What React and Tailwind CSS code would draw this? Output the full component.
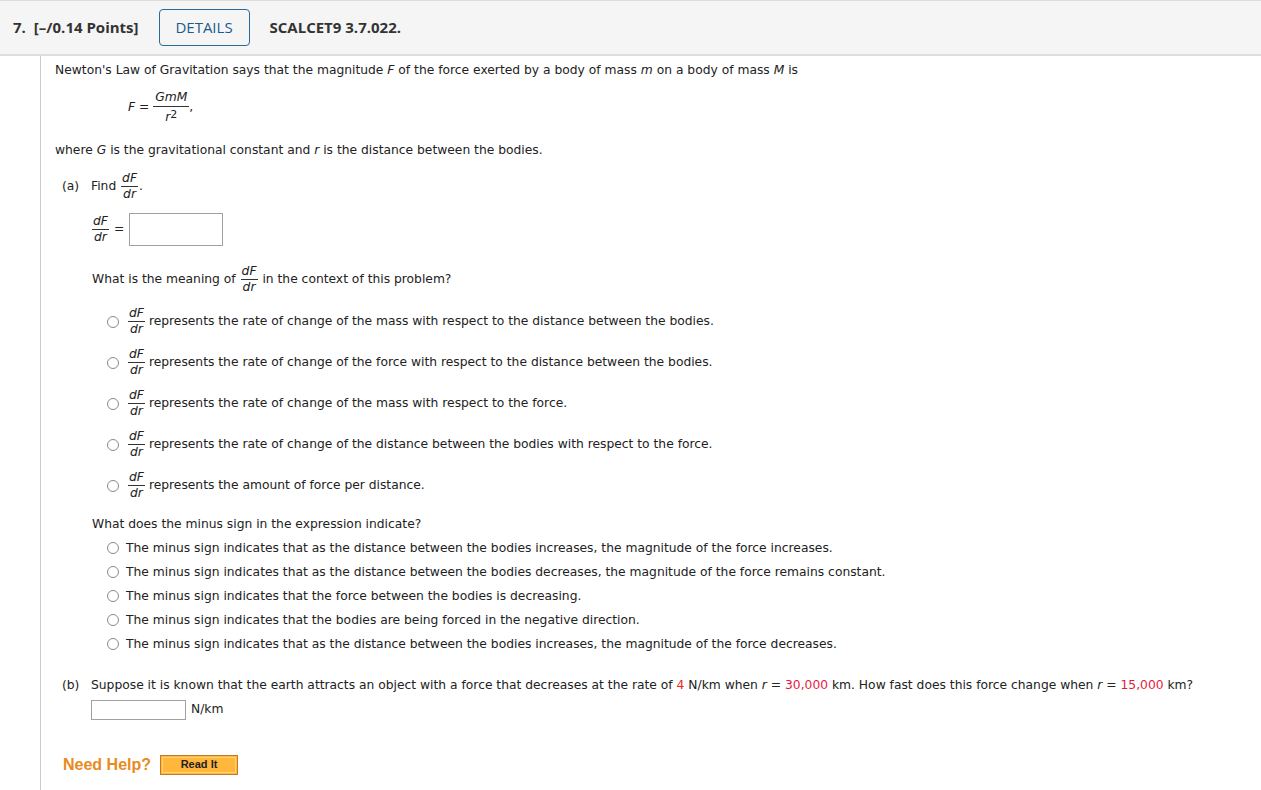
import React from "react";

function Frac({ num, den }) {
  return (
    <span className="inline-flex flex-col items-center align-middle mx-[1px]">
      <span className="leading-[13px] px-[1px] pb-[1px]">{num}</span>
      <span className="h-px w-full bg-[#333]" />
      <span className="leading-[13px] pt-[1px]">{den}</span>
    </span>
  );
}

const dFdr = <Frac num={<i>dF</i>} den={<i>dr</i>} />;

function Radio() {
  return (
    <span className="inline-block w-[12px] h-[12px] rounded-full border border-[#8a8a8a] bg-white shrink-0" />
  );
}

const meanings = [
  "represents the rate of change of the mass with respect to the distance between the bodies.",
  "represents the rate of change of the force with respect to the distance between the bodies.",
  "represents the rate of change of the mass with respect to the force.",
  "represents the rate of change of the distance between the bodies with respect to the force.",
  "represents the amount of force per distance.",
];

const minusOptions = [
  "The minus sign indicates that as the distance between the bodies increases, the magnitude of the force increases.",
  "The minus sign indicates that as the distance between the bodies decreases, the magnitude of the force remains constant.",
  "The minus sign indicates that the force between the bodies is decreasing.",
  "The minus sign indicates that the bodies are being forced in the negative direction.",
  "The minus sign indicates that as the distance between the bodies increases, the magnitude of the force decreases.",
];

export default function App() {
  return (
    <div className="w-[1261px] h-[790px] bg-white overflow-hidden">
      {/* question header */}
      <div className="h-[56px] bg-[#f5f5f5] border-t border-b-2 border-[#dddddd] flex items-center pl-[13px] text-[#333] font-['Open_Sans',sans-serif]">
        <span className="text-[15px] font-bold">7.</span>
        <span className="text-[15px] font-bold ml-[8px]">[–/0.14 Points]</span>
        <span className="ml-[20px] w-[91px] h-[37px] border border-[#2a6a96] rounded-[4px] flex items-center justify-center text-[15px] font-medium text-[#1d5a8c]">
          DETAILS
        </span>
        <span className="ml-[20px] text-[15px] font-bold">SCALCET9 3.7.022.</span>
      </div>

      {/* question body */}
      <div className="ml-[40px] border-l border-[#cccccc] pl-[14px] h-[734px] text-[12.3px] text-[#222] font-['DejaVu_Sans',sans-serif]">
        <div className="h-[28px] flex items-center">
          <span>
            Newton's Law of Gravitation says that the magnitude <i>F</i> of the force exerted by a body of mass <i>m</i> on a body of mass <i>M</i> is
          </span>
        </div>

        <div className="h-[46px] flex items-center pl-[73px]">
          <span>
            <i>F</i> ={" "}
            <span className="inline-flex flex-col items-center align-middle">
              <span className="leading-[13px] px-[2px] pb-[2px]">
                <i>GmM</i>
              </span>
              <span className="h-px w-full bg-[#333]" />
              <span className="leading-[13px] pt-[4px]">
                <i>r</i>
                <sup className="text-[11px] relative -top-[3px]">2</sup>
              </span>
            </span>
            ,
          </span>
        </div>

        <div className="mt-[1px] h-[38px] flex items-center">
          <span>
            where <i>G</i> is the gravitational constant and <i>r</i> is the distance between the bodies.
          </span>
        </div>

        {/* part a */}
        <div className="h-[34px] flex items-center pl-[7px]">
          <span className="w-[29px]">(a)</span>
          <span>Find {dFdr}.</span>
        </div>

        <div className="h-[53px] flex items-center pl-[36px]">
          {dFdr}
          <span className="ml-[4px]">=</span>
          <span className="ml-[5px] w-[94px] h-[33px] border border-[#a0a0a0] bg-white" />
        </div>

        <div className="mt-[2px] h-[43px] flex items-center pl-[37px]">
          <span>What is the meaning of {dFdr} in the context of this problem?</span>
        </div>

        <div className="pl-[52px]">
          {meanings.map((m) => (
            <div key={m} className="h-[41px] flex items-center">
              <Radio />
              <span className="ml-[8px]">{dFdr}</span>
              <span className="ml-[3px]">{m}</span>
            </div>
          ))}
        </div>

        <div className="mt-[6px] h-[24px] flex items-center pl-[37px]">
          What does the minus sign in the expression indicate?
        </div>

        <div className="pl-[52px]">
          {minusOptions.map((m) => (
            <div key={m} className="h-[24px] flex items-center">
              <Radio />
              <span className="ml-[7px]">{m}</span>
            </div>
          ))}
        </div>

        {/* part b */}
        <div className="mt-[17.5px] h-[24px] flex items-center pl-[7px]">
          <span className="w-[29px]">(b)</span>
          <span>
            Suppose it is known that the earth attracts an object with a force that decreases at the rate of{" "}
            <span className="text-[#ee2222]">4</span> N/km when <i>r</i> ={" "}
            <span className="text-[#e8173c]">30,000</span> km. How fast does this force change when <i>r</i> ={" "}
            <span className="text-[#e8173c]">15,000</span> km?
          </span>
        </div>

        <div className="h-[24px] flex items-center pl-[36px]">
          <span className="w-[95px] h-[20px] border border-[#a0a0a0] bg-white" />
          <span className="ml-[5px]">N/km</span>
        </div>

        <div className="mt-[31px] h-[24px] flex items-center pl-[8px]">
          <span className="font-['Liberation_Sans',sans-serif] font-bold text-[16px] text-[#e98a1f]">
            Need Help?
          </span>
          <span className="ml-[9px] w-[78px] h-[20px] border border-[#c57a20] bg-[#ffb83c] p-[1px] flex">
            <span className="flex-1 border border-[#ffd27a] flex items-center justify-center font-['Liberation_Sans',sans-serif] font-bold text-[11px] text-[#222]">
              Read It
            </span>
          </span>
        </div>
      </div>
    </div>
  );
}
